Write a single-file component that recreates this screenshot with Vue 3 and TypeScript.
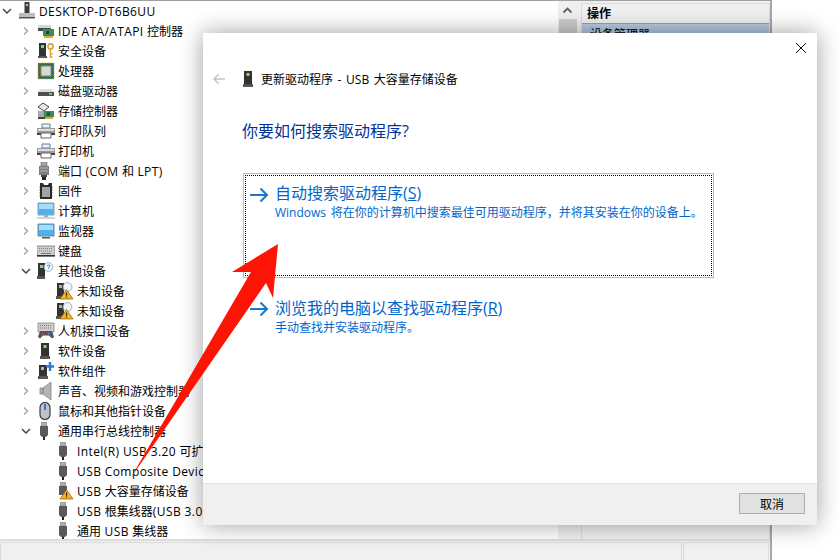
<script setup lang="ts">
interface Row {
  label: string
  level: 0 | 1 | 2
  state: 'open' | 'closed' | 'leaf'
  icon: string
}

const rows: Row[] = [
  { label: 'DESKTOP-DT6B6UU', level: 0, state: 'open', icon: 'pc' },
  { label: 'IDE ATA/ATAPI 控制器', level: 1, state: 'closed', icon: 'ide' },
  { label: '安全设备', level: 1, state: 'closed', icon: 'sec' },
  { label: '处理器', level: 1, state: 'closed', icon: 'cpu' },
  { label: '磁盘驱动器', level: 1, state: 'closed', icon: 'disk' },
  { label: '存储控制器', level: 1, state: 'closed', icon: 'store' },
  { label: '打印队列', level: 1, state: 'closed', icon: 'print' },
  { label: '打印机', level: 1, state: 'closed', icon: 'print' },
  { label: '端口 (COM 和 LPT)', level: 1, state: 'closed', icon: 'port' },
  { label: '固件', level: 1, state: 'closed', icon: 'chip' },
  { label: '计算机', level: 1, state: 'closed', icon: 'laptop' },
  { label: '监视器', level: 1, state: 'closed', icon: 'monitor' },
  { label: '键盘', level: 1, state: 'closed', icon: 'kbd' },
  { label: '其他设备', level: 1, state: 'open', icon: 'other' },
  { label: '未知设备', level: 2, state: 'leaf', icon: 'unknown' },
  { label: '未知设备', level: 2, state: 'leaf', icon: 'unknown' },
  { label: '人机接口设备', level: 1, state: 'closed', icon: 'hid' },
  { label: '软件设备', level: 1, state: 'closed', icon: 'tower' },
  { label: '软件组件', level: 1, state: 'closed', icon: 'comp' },
  { label: '声音、视频和游戏控制器', level: 1, state: 'closed', icon: 'sound' },
  { label: '鼠标和其他指针设备', level: 1, state: 'closed', icon: 'mouse' },
  { label: '通用串行总线控制器', level: 1, state: 'open', icon: 'usb' },
  { label: 'Intel(R) USB 3.20 可扩展主机控制器', level: 2, state: 'leaf', icon: 'usb' },
  { label: 'USB Composite Device', level: 2, state: 'leaf', icon: 'usb' },
  { label: 'USB 大容量存储设备', level: 2, state: 'leaf', icon: 'usbwarn' },
  { label: 'USB 根集线器(USB 3.0)', level: 2, state: 'leaf', icon: 'usb' },
  { label: '通用 USB 集线器', level: 2, state: 'leaf', icon: 'usb' }
]

/* Latin runs are set slightly wider than the CJK runs around them. */
function segments(label: string): { text: string; latin: boolean }[] {
  return label
    .split(/([\x20-\x7e]+)/)
    .filter((s) => s.length > 0)
    .map((s) => ({ text: s, latin: /^[\x20-\x7e]+$/.test(s) }))
}
</script>

<template>
  <div class="page">
    <svg class="defs" width="0" height="0" aria-hidden="true">
      <defs>
        <symbol id="tri" viewBox="0 0 18 18">
          <path d="M10.5 7.5 17 17H4z" fill="#f5b325" stroke="#8a5a10" stroke-width=".7" />
          <path d="M10.5 10.5v3.2M10.5 14.6v1" stroke="#222" stroke-width="1.2" />
        </symbol>
        <symbol id="i-pc" viewBox="0 0 18 18">
          <path d="M6.5 0h5v11h-5z" fill="#3c3c3c" />
          <path d="M8 2h2v2H8z" fill="#9ae06a" />
          <path d="M1 11h16v5H1z" fill="#bdbdbd" />
          <path d="M1 15h16v1.5H1z" fill="#555" />
        </symbol>
        <symbol id="i-ide" viewBox="0 0 18 18">
          <path d="M1 3h13v3H1z" fill="#d5d5d5" />
          <path d="M1 6h13v3H1z" fill="#4a4a4a" />
          <path d="M6 7h11v7H6z" fill="#3e8a5a" />
          <path d="M9 9h3v3H9z" fill="#1d4d33" />
          <path d="M7 14h9v2H7z" fill="#e3a92f" />
        </symbol>
        <symbol id="i-sec" viewBox="0 0 18 18">
          <path d="M2 1h7v13H2z" fill="#333" />
          <path d="M4 3h3v3H4z" fill="#86d86a" />
          <path d="M1 14h9v2H1z" fill="#555" />
          <circle cx="13.5" cy="4.5" r="2.6" fill="none" stroke="#d9a338" stroke-width="1.6" />
          <path d="M13.5 7v9M13.5 12h2M13.5 15h2" stroke="#d9a338" stroke-width="1.4" />
        </symbol>
        <symbol id="i-cpu" viewBox="0 0 18 18">
          <path d="M1 1h16v16H1z" fill="#3a6b4c" />
          <path d="M1 1h16v16H1z" fill="none" stroke="#c9a64b" stroke-width="1" stroke-dasharray="1 1" />
          <path d="M4 4h10v10H4z" fill="#d9d9d2" stroke="#7d8d80" />
        </symbol>
        <symbol id="i-disk" viewBox="0 0 18 18">
          <path d="M3 7h12l2 3H1z" fill="#dcdcdc" />
          <path d="M1 10h16v4H1z" fill="#4e4e4e" />
          <path d="M12 11h3v1.6h-3z" fill="#7fe05f" />
        </symbol>
        <symbol id="i-store" viewBox="0 0 18 18">
          <path d="M6 1 12 5 7 9 1 5z" fill="#e8e8e8" stroke="#444" />
          <path d="M1 9h9v6H1z" fill="#aaa" />
          <path d="M7 9h10v6H7z" fill="#3e8a5a" />
          <path d="M10 10.5h3v3h-3z" fill="#1d4d33" />
          <path d="M8 15h8v2H8z" fill="#e3a92f" />
          <path d="M1 15h7v2H1z" fill="#444" />
        </symbol>
        <symbol id="i-print" viewBox="0 0 18 18">
          <path d="M5 2h8v4H5z" fill="#eef3f8" stroke="#5a7da0" />
          <path d="M0 6h18v7H0z" fill="#9b9b9b" />
          <path d="M1 7h16v2H1z" fill="#ddd" />
          <path d="M0 11h18v2H0z" fill="#444" />
          <path d="M4 11h10v5H4z" fill="#fff" stroke="#666" />
        </symbol>
        <symbol id="i-port" viewBox="2 0 18 18">
          <path d="M6 0h6v4H6z" fill="#a9a9a9" stroke="#666" stroke-width=".6" />
          <path d="M4 4h10v9H4z" fill="#7d7d7d" />
          <path d="M5 6h8M5 9h8" stroke="#bbb" />
          <path d="M6 13h6v2H6z" fill="#444" />
          <path d="M7 15h4v3H7z" fill="#222" />
        </symbol>
        <symbol id="i-chip" viewBox="0 0 18 18">
          <path d="M3 1h3l1 2h4l1-2h3v16H3z" fill="#2c2c2c" />
          <path d="M5 5h8v10H5z" fill="#a3a3a3" />
          <path d="M2 5h1M2 8h1M2 11h1M2 14h1M15 5h1M15 8h1M15 11h1M15 14h1" stroke="#999" />
        </symbol>
        <symbol id="i-laptop" viewBox="0 0 18 18">
          <path d="M1 1h16v12H1z" fill="#4fb2ee" stroke="#8aa4b8" />
          <path d="M2 2h14v5H2z" fill="#a5dcfa" />
          <path d="M7 13h4v2H7z" fill="#aaa" />
          <path d="M0 15h18v2H0z" fill="#cfd6dc" />
        </symbol>
        <symbol id="i-monitor" viewBox="0 0 18 18">
          <path d="M1 2h16v12H1z" fill="#4fb2ee" stroke="#6e8796" />
          <path d="M2 3h14v5H2z" fill="#a5dcfa" />
          <path d="M5 15h8v1.5H5z" fill="#555" />
        </symbol>
        <symbol id="i-kbd" viewBox="0 0 18 18">
          <path d="M0 4h18v10H0z" fill="#cfcfcf" stroke="#666" stroke-width=".7" />
          <path d="M2 6.5h14M2 9h14" stroke="#7c7c7c" stroke-dasharray="1 1" />
          <path d="M4 11.5h10" stroke="#777" />
          <path d="M0 13h18v1.5H0z" fill="#333" />
        </symbol>
        <symbol id="i-other" viewBox="0 0 18 18">
          <path d="M1 1h7v13H1z" fill="#333" />
          <path d="M3 3h3v3H3z" fill="#86d86a" />
          <path d="M0 14h8v3H0z" fill="#555" />
          <circle cx="11.5" cy="5" r="4.400" fill="#f4f8fc" stroke="#9fb0c0" />
          <path d="M10 3.800q1.500-1.500 3 0-.2 1.200-1.500 1.800v1" fill="none" stroke="#3a78c0" />
        </symbol>
        <symbol id="i-unknown" viewBox="0 0 18 18">
          <path d="M1 1h7v13H1z" fill="#333" />
          <path d="M3 3h3v3H3z" fill="#86d86a" />
          <path d="M0 14h6v3H0z" fill="#555" />
          <circle cx="11.5" cy="5" r="4.4" fill="#f4f8fc" stroke="#9fb0c0" />
          <use href="#tri" width="18" height="18" />
        </symbol>
        <symbol id="i-hid" viewBox="0 0 18 18">
          <path d="M1 1h16v9H1z" fill="#cfcfcf" stroke="#777" stroke-width=".7" />
          <path d="M3 3.5h12M3 6h12" stroke="#777" stroke-dasharray="1 1" />
          <path d="M1 15 3 9h12l2 6-2 1.500-3-3H6l-3 3z" fill="#555" />
          <circle cx="6" cy="11.500" r="1.200" fill="#c33" />
          <circle cx="12" cy="11.500" r="1.200" fill="#38c" />
        </symbol>
        <symbol id="i-tower" viewBox="1 0 18 18">
          <path d="M5 1h8v13H5z" fill="#333" />
          <path d="M7.500 3h3v3h-3z" fill="#7fe05f" />
          <path d="M4 14h10v3H4z" fill="#555" />
        </symbol>
        <symbol id="i-comp" viewBox="0 0 18 18">
          <path d="M2 3h8v11H2z" fill="#333" />
          <path d="M4 5h3v3H4z" fill="#7fe05f" />
          <path d="M1 14h10v3H1z" fill="#555" />
          <path d="M13 0v9M9 4.500h8" stroke="#2b7cd3" stroke-width="2.400" />
        </symbol>
        <symbol id="i-sound" viewBox="0 0 18 18">
          <path d="M3 6h3l8-6v18l-8-6H3z" fill="#b5b5b5" stroke="#777" stroke-width=".7" />
          <path d="M6 6v6" stroke="#777" />
        </symbol>
        <symbol id="i-mouse" viewBox="1 0 18 18">
          <rect x="4" y="0.500" width="10" height="17" rx="5" fill="#b9c4cf" stroke="#3d3d3d" stroke-width="1.200" />
          <path d="M9 2v6" stroke="#2f5f95" stroke-width="1.600" />
        </symbol>
        <symbol id="i-usb" viewBox="2 0 18 18">
          <path d="M6.500 0h5v4h-5z" fill="#b0b0b0" stroke="#777" stroke-width=".6" />
          <path d="M5 4h8v9l-2 2H7l-2-2z" fill="#5a5a5a" />
          <path d="M8 15h2v3H8z" fill="#222" />
        </symbol>
        <symbol id="i-usbwarn" viewBox="0 0 18 18">
          <path d="M4.500 0h5v4h-5z" fill="#b0b0b0" stroke="#777" stroke-width=".6" />
          <path d="M3 4h8v9H3z" fill="#5a5a5a" />
          <use href="#tri" width="18" height="18" />
        </symbol>
      </defs>
    </svg>

    <div class="window">
      <div class="main">
        <div class="tree">
          <div v-for="(r, i) in rows" :key="i" class="row" :class="'lv' + r.level">
            <span class="chev">
              <svg v-if="r.state === 'closed'" width="18" height="20" viewBox="0 0 18 20">
                <path d="M5 6.500 8.500 10 5 13.500" fill="none" stroke="#a6a6a6" stroke-width="1.400" />
              </svg>
              <svg v-else-if="r.state === 'open'" width="18" height="20" viewBox="0 0 18 20">
                <path d="M3 8 7 12 11 8" fill="none" stroke="#404040" stroke-width="1.400" />
              </svg>
            </span>
            <svg class="ico" width="18" height="18"><use :href="'#i-' + r.icon" /></svg>
            <span class="label"><span
                v-for="(s, k) in segments(r.label)"
                :key="k"
                :class="{ latin: s.latin }"
              >{{ s.text }}</span></span>
          </div>
        </div>
        <div class="scroll">
          <svg width="18" height="17" viewBox="0 0 18 17">
            <path d="M4.500 10.500 8.500 6.500 12.500 10.500" fill="none" stroke="#606060" stroke-width="1.800" />
          </svg>
          <div class="thumb"></div>
        </div>
        <div class="actions">
          <div class="act-head">操作</div>
          <div class="act-sel">设备管理器</div>
        </div>
      </div>
      <div class="status">
        <div class="cell wide"></div>
        <div class="cell"></div>
      </div>
    </div>

    <section class="dialog">
      <div class="close-row">
        <svg width="12" height="12" viewBox="0 0 12 12">
          <path d="M1 1 11 11M11 1 1 11" stroke="#111" stroke-width="1" />
        </svg>
      </div>
      <div class="body">
        <header class="head">
          <svg class="back" width="12" height="12" viewBox="0 0 13 12">
            <path d="M6 1 1 6 6 11M1 6H13" fill="none" stroke="#c4c4c4" stroke-width="1.600" />
          </svg>
          <svg class="head-ico" width="18" height="18"><use href="#i-tower" /></svg>
          <span class="head-text">更新驱动程序 - USB 大容量存储设备</span>
        </header>
        <h1 class="q">你要如何搜索驱动程序?</h1>
        <div class="link active">
          <div class="dots">
            <svg class="arr" width="19" height="16" viewBox="0 0 19 16">
              <path d="M0 8H17M10.500 1.500 17 8l-6.500 6.500" fill="none" stroke="#1a78c8" stroke-width="2" />
            </svg>
            <div class="txt">
              <div class="t1">自动搜索驱动程序(<u>S</u>)</div>
              <div class="t2">Windows 将在你的计算机中搜索最佳可用驱动程序，并将其安装在你的设备上。</div>
            </div>
          </div>
        </div>
        <div class="link second">
          <svg class="arr" width="19" height="16" viewBox="0 0 19 16">
            <path d="M0 8H17M10.500 1.500 17 8l-6.500 6.500" fill="none" stroke="#1a78c8" stroke-width="2" />
          </svg>
          <div class="txt">
            <div class="t1">浏览我的电脑以查找驱动程序(<u>R</u>)</div>
            <div class="t2">手动查找并安装驱动程序。</div>
          </div>
        </div>
      </div>
      <footer class="foot">
        <button class="cancel" type="button">取消</button>
      </footer>
    </section>

    <svg class="arrow" width="839" height="560" viewBox="0 0 839 560" aria-hidden="true">
      <polygon points="278,244 232,272 251,272 130,479 266,283 273,298" fill="#fe1404" />
    </svg>
  </div>
</template>

<style>
html, body { margin: 0; background: #fff; overflow: hidden; }
</style>

<style scoped>
.page {
  position: relative;
  width: 839px;
  height: 560px;
  overflow: hidden;
  background: #fff;
  color: #000;
  font: 12px/20px "Open Sans", "Noto Sans CJK SC", sans-serif;
  word-spacing: 1.5px;
}
.defs { position: absolute; }
.window {
  width: 772px;
  height: 560px;
  box-sizing: border-box;
  border-top: 1px solid #a0a0a0;
  border-right: 2px solid #a8a8a8;
  display: flex;
  flex-direction: column;
  background: #f0f0f0;
}
.main { flex: 1; min-height: 0; display: flex; border-bottom: 2px solid #dcdcdc; }
.tree { width: 558px; background: #fff; overflow: hidden; }
.row { height: 20px; display: flex; align-items: center; white-space: nowrap; }
.lv1 { padding-left: 19px; }
.lv2 { padding-left: 38px; }
.chev { width: 18px; height: 20px; flex: none; }
.chev svg { display: block; }
.ico { flex: none; margin-right: 3px; }
.label { color: #000; padding-top: 2px; word-spacing: 0; }
.latin { letter-spacing: .4px; }
.scroll { width: 18px; flex: none; background: #f0f0f0; margin: 0 4px 0 1px; padding-top: 1px; }
.scroll svg { display: block; }
.thumb { height: 300px; background: #cdcdcd; }
.actions {
  flex: 1;
  margin-top: 2px;
  border: solid #dcdcdc;
  border-width: 1px 1px 0 1px;
  background: #f0f0f0;
}
.act-head {
  height: 19px;
  line-height: 20px;
  padding-left: 5px;
  font-weight: 700;
  border-bottom: 1px solid #a0a0a0;
}
.act-sel {
  height: 22px;
  padding-left: 8px;
  line-height: 22px;
  background: linear-gradient(#b8cde4, #9fb6d2);
}
.status { height: 18px; display: flex; flex: none; padding: 1px 1px 0 0; gap: 1px; }
.cell { width: 84px; border: 1px solid #dcdcdc; border-bottom: 0; }
.cell.wide { flex: 1; }

.dialog {
  position: absolute;
  left: 203px;
  top: 33px;
  width: 614px;
  height: 492px;
  background: #fff;
  box-shadow: 0 0 22px rgba(0, 0, 0, .38);
  display: flex;
  flex-direction: column;
}
.close-row { height: 10px; display: flex; justify-content: flex-end; padding: 9px 10px 0 0; flex: none; }
.close-row svg { display: block; }
.body { flex: 1; min-height: 0; }
.head { display: flex; align-items: center; height: 20px; margin-top: 17px; padding-left: 10px; }
.back { margin-right: 18px; }
.head-ico { margin-right: 3px; margin-left: -3px; }
.head-text { padding-top: 2px; }
.q {
  margin: 30px 0 0 39px;
  height: 24px;
  font-size: 16px;
  line-height: 24px;
  font-weight: 400;
  color: #003399;
}
.link { display: flex; margin-left: 40px; width: 471px; box-sizing: border-box; }
.link.active { margin-top: 30px; height: 105px; border: 1px solid #8ec5f0; padding: 1px; }
.dots { flex: 1; display: flex; border: 1px dotted #000; padding: 6px 0 0 4px; }
.active .arr { margin-top: 5px; }
.link.second { margin-top: 18px; padding: 1px 0 0 7px; }
.arr { flex: none; margin: 4px 6px 0 0; }
.txt { color: #0066cc; }
.t1 { font-size: 16px; line-height: 22px; white-space: nowrap; }
.t2 { font-size: 12px; line-height: 17px; white-space: nowrap; }
.foot {
  flex: none;
  background: #f0f0f0;
  border-top: 1px solid #dfdfdf;
  display: flex;
  justify-content: flex-end;
  align-items: flex-start;
  padding: 9px 12px 0 0;
  box-sizing: border-box;
  height: 42px;
}
.cancel {
  width: 66px;
  height: 21px;
  padding: 0;
  border: 1px solid #adadad;
  background: #e1e1e1;
  color: #000;
  font: 12px/18px "Noto Sans CJK SC", sans-serif;
}
.arrow { position: absolute; left: 0; top: 0; pointer-events: none; }
</style>
